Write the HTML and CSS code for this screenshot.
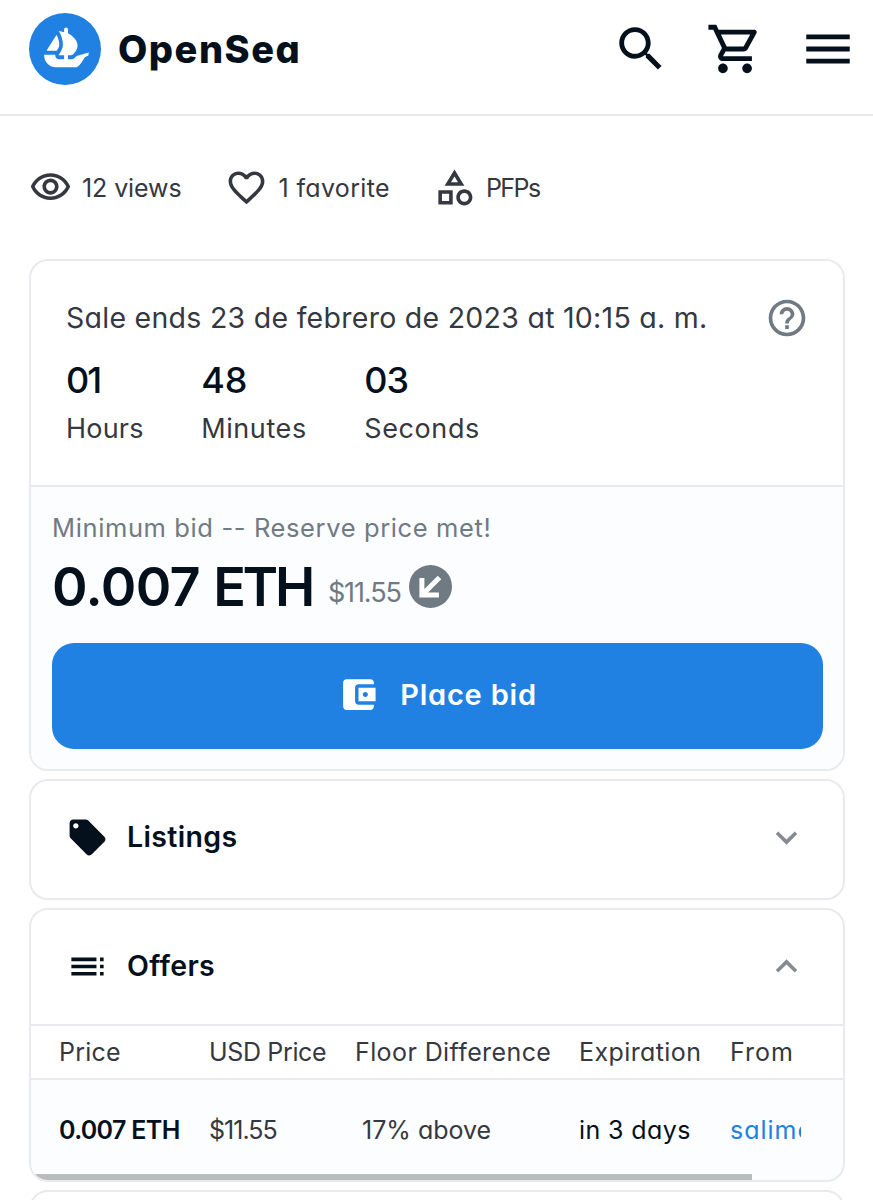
FILE: index.html
```html
<!DOCTYPE html>
<html lang="en">
<head>
    <meta charset="UTF-8">
    <meta name="viewport" content="width=device-width, initial-scale=1.0">
    <title>OpenSea</title>
    <link rel="stylesheet" href="styles.css">
</head>
<body>
    <header>
        <a class="brand" href="#">
            <svg class="logo" viewBox="0 0 90 90">
                <circle cx="45" cy="45" r="45" fill="#2081e2"/>
                <path fill="#fff" d="M22.2 46.5L34.1 27.9c.2-.3.6-.3.7 0 2 4.400 3.600 9.900 2.900 13.300-.4 1.400-1.300 3.200-2.800 5.700-.1.200-.2.200-.3.200h-12c-.4 0-.6-.3-.4-.6z"/>
                <path fill="#fff" d="M74.400 49.900v2.900c0 .2-.1.300-.3.400-.9.400-4 1.800-5.300 3.600-3.300 4.600-5.800 11.100-11.400 11.100H33.900c-8.300 0-15-6.700-15-15.100v-.2c0-.2.2-.4.4-.4h13.100c.3 0 .4.200.4.500-.1 2.800 1.900 5 4.600 5h6.500v-5h-6.400c-.3 0-.5-.4-.3-.6 2.900-4.300 5.200-8.300 5.200-12.800 0-5.700-2.200-11.700-4.900-16.500-.1-.3.100-.5.400-.4l6 1.700v-3.500c0-1.400 1.100-2.500 2.400-2.500s2.400 1.100 2.400 2.500v4.800c6 3.200 12 8.800 12 15.400 0 3.400-1.800 6.400-3.800 8.900-1.200 1.700-2.600 3-4.300 3h-3.900v5h4.900c1.100 0 2.100-.4 3-1.100.3-.3 1.500-1.300 2.900-2.900l15.300-4.400c.3-.1.600.2.600.6z"/>
            </svg>
            <span>OpenSea</span>
        </a>
        <nav>
            <svg viewBox="0 0 24 24"><path d="M15.500 14h-.79l-.28-.27C15.410 12.590 16 11.110 16 9.500 16 5.910 13.090 3 9.500 3S3 5.910 3 9.500 5.910 16 9.500 16c1.610 0 3.090-.59 4.230-1.570l.27.28v.79l5 4.990L20.490 19l-4.990-5zm-6 0C7.010 14 5 11.990 5 9.500S7.010 5 9.500 5 14 7.010 14 9.500 11.990 14 9.500 14z"/></svg>
            <svg viewBox="0 0 24 24"><path d="M15.550 13c.75 0 1.410-.41 1.750-1.030l3.580-6.490c.37-.66-.11-1.480-.87-1.480H5.210l-.94-2H1v2h2l3.600 7.590-1.350 2.440C4.520 15.370 5.480 17 7 17h12v-2H7l1.100-2h7.450zM6.160 6h12.150l-2.760 5H8.530L6.160 6zM7 18c-1.100 0-1.990.9-1.990 2S5.900 22 7 22s2-.9 2-2-.9-2-2-2zm10 0c-1.100 0-1.990.9-1.990 2s.89 2 1.990 2 2-.9 2-2-.9-2-2-2z"/></svg>
            <svg viewBox="0 0 24 24"><path d="M3 18h18v-2H3v2zm0-5h18v-2H3v2zm0-7v2h18V6H3z"/></svg>
        </nav>
    </header>

    <main>
        <div class="stats">
            <div class="stat">
                <svg class="icon" viewBox="0 0 24 24"><path d="M12 6c3.790 0 7.170 2.130 8.820 5.500C19.170 14.870 15.790 17 12 17s-7.170-2.130-8.820-5.500C4.830 8.130 8.210 6 12 6m0-2C7 4 2.730 7.110 1 11.500 2.730 15.890 7 19 12 19s9.270-3.110 11-7.500C21.270 7.110 17 4 12 4zm0 5c1.380 0 2.500 1.120 2.500 2.500S13.380 14 12 14s-2.500-1.120-2.500-2.500S10.620 9 12 9m0-2c-2.480 0-4.500 2.020-4.500 4.500S9.520 16 12 16s4.500-2.020 4.500-4.500S14.480 7 12 7z"/></svg>
                <span class="views">12 views</span>
            </div>
            <div class="stat">
                <svg class="icon" viewBox="0 0 24 24"><path d="M16.500 3c-1.740 0-3.410.81-4.500 2.090C10.910 3.810 9.240 3 7.500 3 4.420 3 2 5.420 2 8.500c0 3.780 3.400 6.860 8.550 11.540L12 21.350l1.450-1.320C18.600 15.360 22 12.280 22 8.500 22 5.420 19.580 3 16.500 3zm-4.400 15.550l-.1.100-.1-.1C7.140 14.240 4 11.390 4 8.500 4 6.500 5.500 5 7.500 5c1.540 0 3.040.99 3.570 2.360h1.870C13.460 5.990 14.960 5 16.500 5c2 0 3.500 1.500 3.500 3.500 0 2.890-3.140 5.740-7.900 10.050z"/></svg>
                <span class="favs">1 favorite</span>
            </div>
            <div class="stat">
                <svg class="icon" viewBox="0 0 24 24"><path d="M12 2l-5.500 9h11L12 2zm0 3.840L13.930 9h-3.870L12 5.840zM17.500 13c-2.490 0-4.500 2.010-4.500 4.500s2.010 4.500 4.500 4.500 4.500-2.010 4.500-4.500-2.010-4.500-4.500-4.500zm0 7c-1.380 0-2.500-1.120-2.500-2.500s1.120-2.500 2.500-2.500 2.500 1.120 2.500 2.500-1.120 2.500-2.500 2.500zM3 21.500h8v-8H3v8zm2-6h4v4H5v-4z"/></svg>
                <span class="pfps">PFPs</span>
            </div>
        </div>

        <section class="card">
            <div class="sale">
                <div class="sale-title">
                    <span>Sale ends 23 de febrero de 2023 at 10:15 a. m.</span>
                    <svg class="icon help" viewBox="0 0 24 24"><path d="M11 18h2v-2h-2v2zm1-16C6.480 2 2 6.480 2 12s4.480 10 10 10 10-4.480 10-10S17.520 2 12 2zm0 18c-4.410 0-8-3.590-8-8s3.590-8 8-8 8 3.590 8 8-3.590 8-8 8zm0-14c-2.210 0-4 1.790-4 4h2c0-1.100.9-2 2-2s2 .9 2 2c0 2-3 1.750-3 5h2c0-2.250 3-2.500 3-5 0-2.210-1.790-4-4-4z"/></svg>
                </div>
                <div class="timer">
                    <div class="unit hours"><b>01</b><span>Hours</span></div>
                    <div class="unit minutes"><b>48</b><span>Minutes</span></div>
                    <div class="unit seconds"><b>03</b><span>Seconds</span></div>
                </div>
            </div>
            <div class="bid">
                <div class="bid-label">Minimum bid -- Reserve price met!</div>
                <div class="price">
                    <strong>0.007 <span class="eth">ETH</span></strong>
                    <span class="usd">$11.55</span>
                    <svg class="badge" viewBox="0 0 43 43">
                        <circle cx="21.500" cy="21.500" r="21.500" fill="#707a83"/>
                        <path d="M12.900 13v17h17M14 29L30.500 12.500" fill="none" stroke="#fff" stroke-width="5"/>
                    </svg>
                </div>
                <button>
                    <svg viewBox="0 0 24 24"><path d="M21 18v1c0 1.100-.9 2-2 2H5c-1.110 0-2-.9-2-2V5c0-1.100.89-2 2-2h14c1.100 0 2 .9 2 2v1h-9c-1.110 0-2 .9-2 2v8c0 1.100.89 2 2 2h9zm-9-2h10V8H12v8zm4-2.500c-.83 0-1.500-.67-1.500-1.500s.67-1.500 1.500-1.500 1.500.67 1.500 1.500-.67 1.500-1.500 1.500z"/></svg>
                    <span>Place bid</span>
                </button>
            </div>
        </section>

        <section class="card">
            <div class="panel-head listings">
                <svg class="icon" viewBox="0 0 24 24"><path d="M21.410 11.580l-9-9C12.050 2.220 11.550 2 11 2H4c-1.100 0-2 .9-2 2v7c0 .55.22 1.050.59 1.420l9 9c.36.36.86.58 1.410.58.55 0 1.050-.22 1.410-.59l7-7c.37-.36.59-.86.59-1.410 0-.55-.23-1.060-.59-1.420zM5.500 7C4.670 7 4 6.330 4 5.500S4.670 4 5.500 4 7 4.670 7 5.500 6.330 7 5.500 7z"/></svg>
                <h2>Listings</h2>
                <svg class="icon arrow" viewBox="0 0 24 24"><path d="M7.410 8.590L12 13.170l4.590-4.580L18 10l-6 6-6-6z"/></svg>
            </div>
        </section>

        <section class="card">
            <div class="panel-head offers">
                <svg class="icon" viewBox="0 0 24 24"><path d="M3 9h14V7H3v2zm0 4h14v-2H3v2zm0 4h14v-2H3v2zm16 0h2v-2h-2v2zm0-10v2h2V7h-2zm0 6h2v-2h-2v2z"/></svg>
                <h2>Offers</h2>
                <svg class="icon arrow" viewBox="0 0 24 24"><path d="M12 8l-6 6 1.410 1.410L12 10.830l4.590 4.580L18 14z"/></svg>
            </div>
            <div class="row row-head">
                <span class="c1">Price</span>
                <span class="c2">USD Price</span>
                <span class="c3">Floor Difference</span>
                <span class="c4">Expiration</span>
                <span class="c5">From</span>
            </div>
            <div class="row row-item">
                <span class="c1">0.007 ETH</span>
                <span class="c2">$11.55</span>
                <span class="c3">17% above</span>
                <span class="c4">in 3 days</span>
                <a class="c5" href="#">salimo</a>
            </div>
            <div class="scroll"><div class="thumb"></div></div>
        </section>

        <section class="card next"></section>
    </main>
</body>
</html>
```

FILE: styles.css
```css
* {
    box-sizing: border-box;
}
body {
    margin: 0;
    height: 1200px;
    overflow: hidden;
    background: #fff;
    color: #04111d;
    font-family: Inter, sans-serif;
    font-feature-settings: "cv11";
    font-size: 25px;
    line-height: 1;
    white-space: nowrap;
}
svg {
    display: block;
    flex: none;
    fill: currentColor;
}
a {
    color: inherit;
    text-decoration: none;
}
h2 {
    margin: 0;
}
header {
    display: flex;
    justify-content: space-between;
    height: 116px;
    padding: 13px 16px 0 29px;
    border-bottom: 2px solid #e8e9eb;
}
.brand {
    display: flex;
    align-items: center;
    gap: 17px;
    height: 72px;
    font-size: 38px;
    font-weight: 800;
    letter-spacing: 1.5px;
}
.logo {
    width: 72px;
    height: 72px;
}
nav {
    display: flex;
    align-items: center;
    gap: 35.5px;
    height: 72px;
}
nav svg {
    width: 58px;
    height: 58px;
}
main {
    padding: 0 28px 0 29px;
}
.icon {
    width: 43px;
    height: 43px;
}
.stats {
    display: flex;
    gap: 43px;
    height: 143px;
    align-items: center;
    color: #353840;
}
.stat {
    display: flex;
    align-items: center;
    gap: 10px;
}
.stat span {
    padding-top: 1px;
}
.views {
    letter-spacing: -0.1px;
}
.favs {
    margin-left: 1px;
    letter-spacing: 0.35px;
}
.pfps {
    letter-spacing: -1.6px;
}
.card {
    margin-bottom: 8px;
    border: 2px solid #e8eaed;
    border-radius: 19px;
    overflow: hidden;
}
.sale {
    height: 224px;
    padding: 35px 34px 0 35px;
    color: #353840;
}
.sale-title {
    display: flex;
    justify-content: space-between;
    align-items: center;
    font-size: 28.5px;
    letter-spacing: 0.27px;
}
.help {
    width: 44px;
    height: 44px;
    color: #707a83;
}
.timer {
    display: flex;
    gap: 57.5px;
    margin-top: 22px;
    font-size: 27px;
}
.unit b {
    display: block;
    margin-bottom: 17px;
    color: #04111d;
    font-size: 36px;
    font-weight: 500;
    letter-spacing: 0;
}
.hours {
    letter-spacing: 0.2px;
}
.hours b {
    letter-spacing: -2px;
}
.minutes,
.seconds {
    letter-spacing: 0.6px;
}
.seconds b {
    letter-spacing: -1px;
}
.bid {
    height: 284px;
    padding: 28px 20px 0 21px;
    border-top: 2px solid #e8eaed;
    background: #fbfdff;
}
.bid-label {
    color: #707a83;
    font-size: 25.5px;
    letter-spacing: 0.62px;
}
.price {
    display: flex;
    align-items: center;
    margin-top: 19px;
    height: 54px;
}
.price strong {
    font-size: 54px;
    font-weight: 600;
    letter-spacing: -0.6px;
}
.eth {
    letter-spacing: -3.3px;
}
.usd {
    margin: 12px 8px 0 16px;
    color: #707a83;
    font-size: 27px;
    letter-spacing: -1.1px;
}
.badge {
    width: 43px;
    height: 43px;
}
button {
    display: flex;
    align-items: center;
    justify-content: center;
    gap: 21px;
    width: 100%;
    height: 106px;
    margin-top: 29px;
    padding-bottom: 3px;
    border: 0;
    border-radius: 22px;
    background: #2081e2;
    color: #fff;
    font: inherit;
    font-feature-settings: "cv11";
    font-size: 29px;
    font-weight: 600;
    letter-spacing: 0.8px;
}
button svg {
    width: 41px;
    height: 41px;
}
.panel-head {
    display: flex;
    align-items: center;
    padding: 0 35px;
}
.panel-head h2 {
    margin-left: 18px;
    font-size: 28.5px;
    font-weight: 600;
    letter-spacing: 0.35px;
}
.listings {
    height: 117px;
    padding-bottom: 4px;
}
.offers {
    height: 114px;
    padding-bottom: 1px;
}
.arrow {
    margin-left: auto;
    color: #858b91;
}
.row {
    display: grid;
    grid-template-columns: 150px 146px 224px 151px 71px;
    align-items: center;
    padding-left: 28px;
    height: 54px;
    border-top: 2px solid #e8eaed;
    color: #353840;
}
.row-head .c1 {
    letter-spacing: 0.2px;
}
.row-head .c2 {
    letter-spacing: -0.35px;
}
.row-head .c3,
.c4 {
    letter-spacing: 0.4px;
}
.row-head .c5 {
    letter-spacing: 1px;
}
.row-item {
    height: 96px;
    padding-top: 6px;
    background: #fbfdff;
}
.row-item .c1 {
    color: #04111d;
    font-weight: 600;
    letter-spacing: -0.65px;
}
.row-item .c2 {
    letter-spacing: -1px;
}
.row-item .c3 {
    padding-left: 7px;
}
.row-item .c4 {
    color: #04111d;
}
.row-item .c5 {
    overflow: hidden;
    color: #2081e2;
    letter-spacing: 1px;
}
.scroll {
    background: #fbfdff;
}
.thumb {
    width: 721px;
    height: 6px;
    background: #b9bcbd;
}
.next {
    height: 60px;
}
```
